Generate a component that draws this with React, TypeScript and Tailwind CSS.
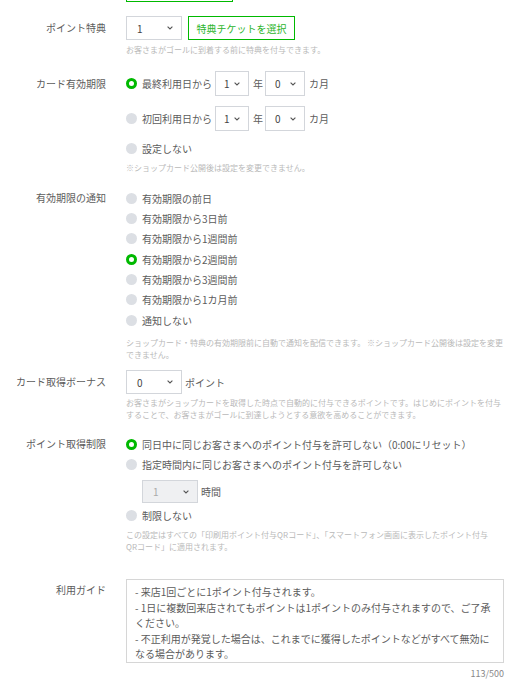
import { type ReactNode } from 'react';

function Radio({ checked = false }: { checked?: boolean }) {
  return checked ? (
    <span className="box-border inline-block h-[11px] w-[11px] shrink-0 rounded-full border-[3px] border-[#00b900] bg-white" />
  ) : (
    <span className="inline-block h-[11px] w-[11px] shrink-0 rounded-full bg-[#dcdfe4]" />
  );
}

function Chevron() {
  return (
    <svg width="6" height="4" viewBox="0 0 6 4" className="shrink-0">
      <path d="M0.6 0.6 L3 3 L5.4 0.6" fill="none" stroke="#555" strokeWidth="1.1" />
    </svg>
  );
}

function Select({
  value,
  className = '',
  disabled = false,
}: {
  value: string;
  className?: string;
  disabled?: boolean;
}) {
  return (
    <div
      className={`flex shrink-0 items-center justify-between border border-[#d3d6db] pr-[8px] text-[10px] ${
        disabled ? 'bg-[#eff0f2] text-[#aaa]' : 'bg-white text-[#444]'
      } ${className}`}
    >
      <span>{value}</span>
      <Chevron />
    </div>
  );
}

function Option({
  checked,
  children,
  className = 'h-5',
}: {
  checked?: boolean;
  children: ReactNode;
  className?: string;
}) {
  return (
    <div className={`flex items-center text-[10px] text-[#5c5c5c] ${className}`}>
      <Radio checked={checked} />
      <span className="ml-[5px] whitespace-nowrap">{children}</span>
    </div>
  );
}

function Hint({ children, className = '' }: { children: ReactNode; className?: string }) {
  return <p className={`text-[8px] leading-[12px] text-[#b9b9b9] ${className}`}>{children}</p>;
}

function Row({
  label,
  labelLeading,
  className = '',
  children,
}: {
  label: string;
  labelLeading: string;
  className?: string;
  children: ReactNode;
}) {
  return (
    <div className={`grid grid-cols-[106px_380px] gap-x-5 ${className}`}>
      <div className={`whitespace-nowrap text-right text-[10px] text-[#5c5c5c] ${labelLeading}`}>{label}</div>
      <div className="flex flex-col">{children}</div>
    </div>
  );
}

const notifyOptions = [
  '有効期限の前日',
  '有効期限から3日前',
  '有効期限から1週間前',
  '有効期限から2週間前',
  '有効期限から3週間前',
  '有効期限から1カ月前',
  '通知しない',
];

export default function App() {
  return (
    <div className="h-[690px] w-[524px] overflow-hidden bg-white font-['Noto_Sans_CJK_JP',sans-serif]">
      {/* bottom edge of the button above */}
      <div className="grid grid-cols-[106px_380px] gap-x-5">
        <div />
        <div className="h-[2px] w-[107px] border-x border-b border-[#00b900]" />
      </div>

      <Row label="ポイント特典" labelLeading="leading-[24px]" className="mt-[14px]">
        <div className="flex h-6 items-center">
          <Select value="1" className="h-6 w-[56px] pl-[10px]" />
          <div className="ml-[6px] flex h-6 w-[107px] items-center justify-center border border-[#00b900] text-[10px] text-[#2cb52c]">
            特典チケットを選択
          </div>
        </div>
        <Hint className="mt-1">お客さまがゴールに到着する前に特典を付与できます。</Hint>
      </Row>

      <Row label="カード有効期限" labelLeading="leading-[25px]" className="mt-[15px]">
        <div className="flex h-[25px] items-center text-[10px] text-[#5c5c5c]">
          <Option checked className="h-[25px]">最終利用日から</Option>
          <Select value="1" className="ml-[3px] h-[25px] w-[34px] pl-[8px]" />
          <span className="ml-[4px]">年</span>
          <Select value="0" className="ml-[2px] h-[25px] w-[40px] pl-[9px]" />
          <span className="ml-[4px]">カ月</span>
        </div>
        <div className="mt-[10px] flex h-[25px] items-center text-[10px] text-[#5c5c5c]">
          <Option className="h-[25px]">初回利用日から</Option>
          <Select value="1" className="ml-[3px] h-[25px] w-[34px] pl-[8px]" />
          <span className="ml-[4px]">年</span>
          <Select value="0" className="ml-[2px] h-[25px] w-[40px] pl-[9px]" />
          <span className="ml-[4px]">カ月</span>
        </div>
        <Option className="mt-[7px] h-5">設定しない</Option>
        <Hint className="mt-1">※ショップカード公開後は設定を変更できません。</Hint>
      </Row>

      <Row label="有効期限の通知" labelLeading="leading-[20px]" className="mt-[14px]">
        {notifyOptions.map((o) => (
          <Option key={o} checked={o === '有効期限から2週間前'} className="h-[20.33px]">
            {o}
          </Option>
        ))}
        <Hint className="mt-[7px]">
          ショップカード・特典の有効期限前に自動で通知を配信できます。 ※ショップカード公開後は設定を変更
          <br />
          できません。
        </Hint>
      </Row>

      <Row label="カード取得ボーナス" labelLeading="leading-[24px]" className="mt-[9px]">
        <div className="flex h-6 items-center text-[10px] text-[#5c5c5c]">
          <Select value="0" className="h-6 w-[56px] pl-[10px]" />
          <span className="ml-[3px]">ポイント</span>
        </div>
        <Hint className="mt-[3px]">
          お客さまがショップカードを取得した時点で自動的に付与できるポイントです。はじめにポイントを付与
          <br />
          することで、お客さまがゴールに到達しようとする意欲を高めることができます。
        </Hint>
      </Row>

      <Row label="ポイント取得制限" labelLeading="leading-[20px]" className="mt-[13px]">
        <Option checked>同日中に同じお客さまへのポイント付与を許可しない（0:00にリセット）</Option>
        <Option>指定時間内に同じお客さまへのポイント付与を許可しない</Option>
        <div className="ml-4 mt-[6px] flex h-[23px] items-center text-[10px] text-[#5c5c5c]">
          <Select value="1" disabled className="h-[23px] w-[56px] pl-[10px]" />
          <span className="ml-[3px]">時間</span>
        </div>
        <Option className="mt-[2px] h-5">制限しない</Option>
        <Hint className="mt-1">
          この設定はすべての「印刷用ポイント付与QRコード」、「スマートフォン画面に表示したポイント付与
          <br />
          QRコード」に適用されます。
        </Hint>
      </Row>

      <Row label="利用ガイド" labelLeading="leading-[22px]" className="mt-[26px]">
        <div className="box-border h-[84px] w-[378px] border border-[#d6d6d6] px-[8px] pt-[4px] text-[10px] leading-[15.5px] text-[#5c5c5c]">
          - 来店1回ごとに1ポイント付与されます。
          <br />
          - 1日に複数回来店されてもポイントは1ポイントのみ付与されますので、ご了承
          <br />
          ください。
          <br />
          - 不正利用が発覚した場合は、これまでに獲得したポイントなどがすべて無効に
          <br />
          なる場合があります。
        </div>
        <div className="mt-[5px] w-[378px] text-right text-[9px] leading-[12px] text-[#888]">113/500</div>
      </Row>
    </div>
  );
}
